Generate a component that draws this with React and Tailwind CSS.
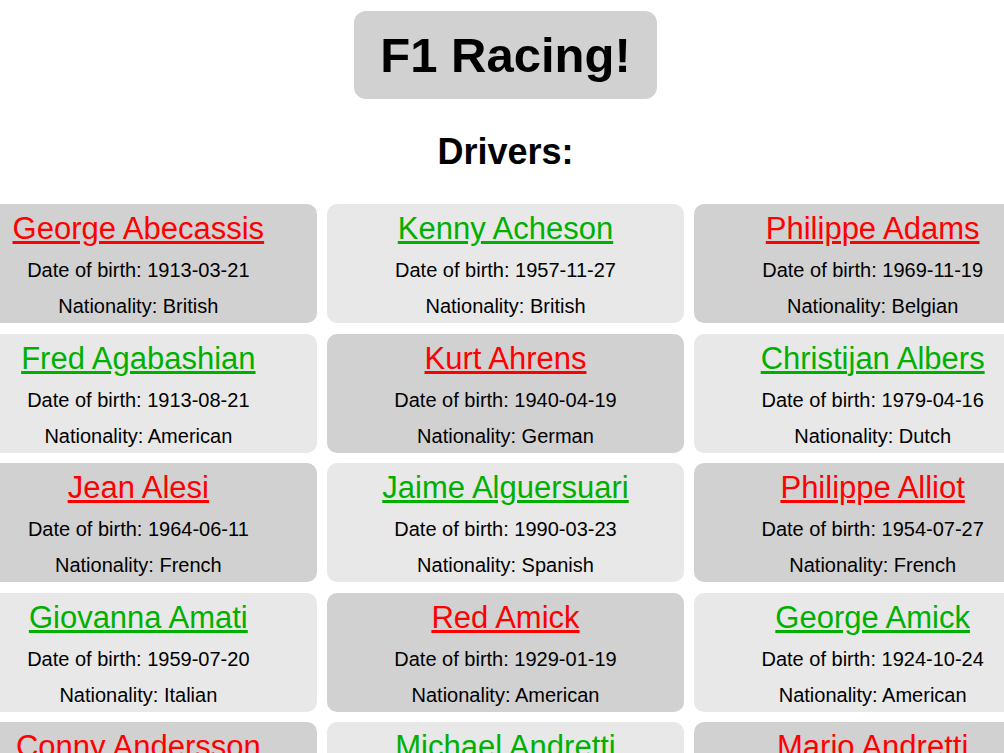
import React from "react";

const drivers = [
  { name: "George Abecassis", dob: "1913-03-21", nationality: "British" },
  { name: "Kenny Acheson", dob: "1957-11-27", nationality: "British" },
  { name: "Philippe Adams", dob: "1969-11-19", nationality: "Belgian" },
  { name: "Fred Agabashian", dob: "1913-08-21", nationality: "American" },
  { name: "Kurt Ahrens", dob: "1940-04-19", nationality: "German" },
  { name: "Christijan Albers", dob: "1979-04-16", nationality: "Dutch" },
  { name: "Jean Alesi", dob: "1964-06-11", nationality: "French" },
  { name: "Jaime Alguersuari", dob: "1990-03-23", nationality: "Spanish" },
  { name: "Philippe Alliot", dob: "1954-07-27", nationality: "French" },
  { name: "Giovanna Amati", dob: "1959-07-20", nationality: "Italian" },
  { name: "Red Amick", dob: "1929-01-19", nationality: "American" },
  { name: "George Amick", dob: "1924-10-24", nationality: "American" },
  { name: "Conny Andersson", dob: "1939-12-28", nationality: "Swedish" },
  { name: "Michael Andretti", dob: "1962-10-05", nationality: "American" },
  { name: "Mario Andretti", dob: "1940-02-28", nationality: "American" },
];

const DriverCard = ({ driver, index }) => {
  const even = index % 2 === 0;
  return (
    <div
      className={
        even
          ? "bg-[#d1d1d1] rounded-[10px] pt-[7px] text-center"
          : "bg-[#e8e8e8] rounded-[10px] pt-[7px] text-center"
      }
    >
      <a
        href="#"
        className={
          even
            ? "block text-[31px] leading-[36px] text-[#ff0000] underline"
            : "block text-[31px] leading-[36px] text-[#00b000] underline"
        }
      >
        <span>{driver.name}</span>
      </a>
      <p className="mt-[6px] text-[20px] leading-[34px]">
        Date of birth: {driver.dob}
      </p>
      <p className="mt-[2px] text-[20px] leading-[34px]">
        Nationality: {driver.nationality}
      </p>
    </div>
  );
};

export default function App() {
  return (
    <div
      className="w-full overflow-hidden bg-white text-black pt-[11px] pb-10"
      style={{ fontFamily: '"Liberation Sans", Arial, sans-serif' }}
    >
      <div className="w-[1091px] ml-[-40px] flex flex-col items-center">
        <div className="h-[88px] px-[26px] flex items-center bg-[#d1d1d1] rounded-[12px]">
          <h1 className="text-[49px] font-bold leading-none">F1 Racing!</h1>
        </div>
        <h2 className="mt-[32px] text-[36px] font-bold leading-[41px]">
          Drivers:
        </h2>
        <div className="mt-[32px] w-full grid grid-cols-3 gap-x-[10.5px] gap-y-[10.5px]">
          {drivers.map((driver, index) => (
            <DriverCard key={index} driver={driver} index={index} />
          ))}
        </div>
      </div>
    </div>
  );
}
